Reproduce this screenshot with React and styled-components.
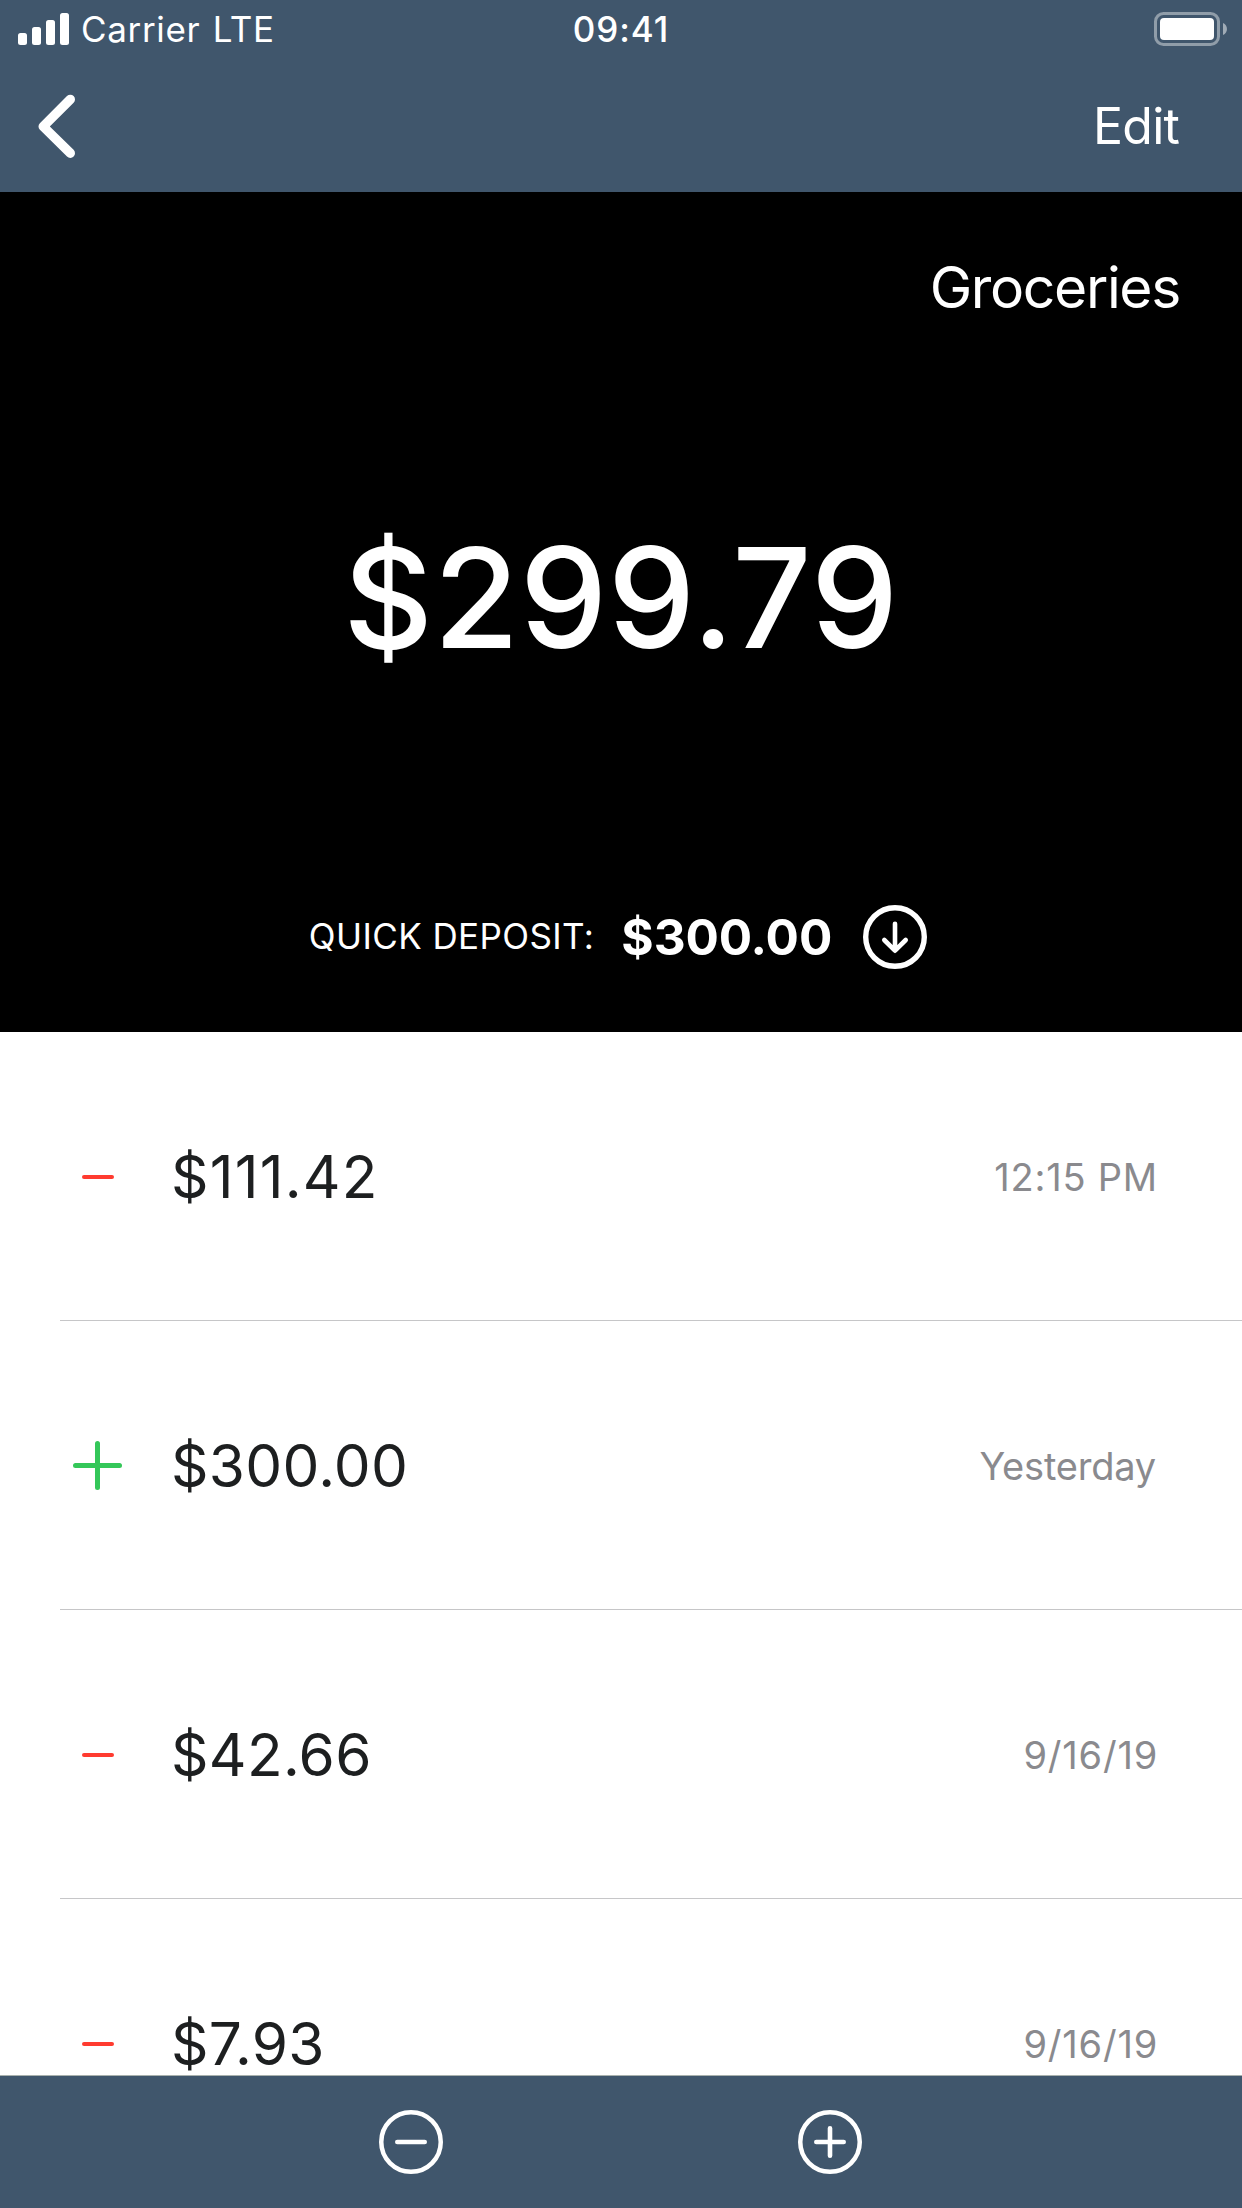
import React from 'react';
import styled, { createGlobalStyle } from 'styled-components';

const GlobalStyle = createGlobalStyle`
  * {
    box-sizing: border-box;
  }

  body {
    margin: 0;
    background: #fff;
    font-family: 'Inter', 'Liberation Sans', sans-serif;
  }

  svg {
    display: block;
    flex-shrink: 0;
  }
`;

// Layout
const Screen = styled.div`
  display: flex;
  flex-direction: column;
  width: 1242px;
  height: 2208px;
  overflow: hidden;
`;

const Header = styled.header`
  height: 192px;
  background: #40566c;
  color: #fff;
`;

const StatusBar = styled.div`
  display: grid;
  grid-template-columns: 1fr auto 1fr;
  align-items: center;
  height: 58px;
  padding: 0 15px 0 18px;
  font-size: 35px;
  line-height: 42px;
`;

const Signal = styled.div`
  display: flex;
  align-items: center;
  gap: 10px;
`;

const Carrier = styled.span`
  letter-spacing: 0.65px;
  word-spacing: 2px;
`;

const Clock = styled.span`
  padding-right: 3px;
  font-weight: 500;
  letter-spacing: 0.9px;
`;

const BatterySlot = styled.div`
  display: flex;
  justify-content: flex-end;
`;

const NavBar = styled.nav`
  display: flex;
  justify-content: space-between;
  align-items: center;
  height: 134px;
  padding: 2px 63px 0 38px;
`;

const NavButton = styled.button`
  padding: 0;
  border: none;
  background: none;
  color: inherit;
  font-family: inherit;
  font-size: 50px;
  line-height: 60px;
  letter-spacing: -0.8px;
`;

// Balance panel
const Hero = styled.section`
  display: flex;
  flex-direction: column;
  height: 840px;
  padding: 60px 0 63px;
  background: #000;
  color: #fff;
`;

const EnvelopeName = styled.h1`
  margin: 0;
  padding-right: 62px;
  font-size: 57px;
  font-weight: 400;
  line-height: 72px;
  letter-spacing: -1.35px;
  text-align: right;
`;

const Balance = styled.div`
  display: flex;
  flex: 1;
  align-items: center;
  justify-content: center;
  padding-bottom: 35px;
  font-size: 139px;
  font-weight: 500;
  letter-spacing: 0.5px;
`;

const QuickDeposit = styled.div`
  display: flex;
  align-items: center;
  justify-content: center;
  height: 64px;
  padding-right: 6px;
`;

const DepositLabel = styled.span`
  margin-right: 27px;
  padding-bottom: 2px;
  font-size: 35px;
  line-height: 42px;
  letter-spacing: 0.4px;
`;

const DepositAmount = styled.span`
  margin-right: 31px;
  font-size: 49.5px;
  font-weight: 700;
  letter-spacing: -0.1px;
`;

// Transactions
const List = styled.ul`
  flex: 1;
  min-height: 0;
  margin: 0;
  padding: 0;
  overflow: hidden;
  list-style: none;
`;

const Row = styled.li`
  display: flex;
  align-items: center;
  height: 289px;
  margin-left: 60px;
  padding: 1px 84px 0 13px;
  border-bottom: 1px solid #c6c6c8;
`;

const Amount = styled.span`
  flex: 1;
  margin-left: 49px;
  color: #1d1f20;
  font-size: 58.5px;
  line-height: 60px;
  letter-spacing: ${props => props.$tracking || '0.3px'};
`;

const When = styled.span`
  padding-right: ${props => props.$inset || '0'};
  color: #8a8a8e;
  font-size: 38px;
  line-height: 46px;
  letter-spacing: ${props => props.$tracking || '0.8px'};
`;

const Toolbar = styled.footer`
  display: flex;
  justify-content: center;
  align-items: center;
  gap: 355px;
  height: 133px;
  padding-right: 1px;
  border-top: 1px solid #a9b1ad;
  background: #40566c;
`;

const ToolButton = styled.button`
  padding: 0;
  border: none;
  background: none;
`;

// Icons
const SignalIcon = () => (
    <svg width="53" height="32" viewBox="0 0 53 32" fill="#fff">
        <rect x="0" y="20" width="9" height="12" rx="2.5" />
        <rect x="14" y="14" width="9" height="18" rx="2.5" />
        <rect x="28" y="7" width="9" height="25" rx="2.5" />
        <rect x="42" y="0" width="9" height="32" rx="2.5" />
    </svg>
);

const BatteryIcon = () => (
    <svg width="73" height="34" viewBox="0 0 73 34">
        <rect x="1.5" y="1.5" width="63" height="31" rx="8" fill="none" stroke="#fff" strokeOpacity="0.42" strokeWidth="3" />
        <rect x="6" y="6" width="54" height="22" rx="4" fill="#fff" />
        <path d="M69 11C74.3 13 74.3 21 69 23Z" fill="#fff" fillOpacity="0.5" />
    </svg>
);

const BackIcon = () => (
    <svg width="38" height="64" viewBox="0 0 38 64" fill="none" stroke="#fff" strokeWidth="9.4" strokeLinecap="round" strokeLinejoin="round">
        <path d="M32.3 5.4L5.2 32.5L32.3 59.2" />
    </svg>
);

const CircleIcon = ({ ring = 4.5, children }) => (
    <svg width="64" height="64" viewBox="0 0 64 64" fill="none" stroke="#fff" strokeWidth="4.6" strokeLinecap="round" strokeLinejoin="round">
        <circle cx="32" cy="32" r={32 - ring / 2} strokeWidth={ring} />
        {children}
    </svg>
);

const SignIcon = ({ type }) => (
    <svg width="49" height="49" viewBox="0 0 49 49" fill={type === 'in' ? '#34c759' : '#ff3b30'}>
        {type === 'in' ? (
            <>
                <rect x="0" y="22" width="49" height="5" rx="2.5" />
                <rect x="22" y="0" width="5" height="49" rx="2.5" />
            </>
        ) : (
            <rect x="9" y="23" width="32" height="4" rx="2" />
        )}
    </svg>
);

const transactions = [
    { type: 'out', amount: '$111.42', when: '12:15 PM', tracking: '1.2px' },
    { type: 'in', amount: '$300.00', when: 'Yesterday', whenTracking: '-0.2px', inset: '2px' },
    { type: 'out', amount: '$42.66', when: '9/16/19' },
    { type: 'out', amount: '$7.93', when: '9/16/19' },
];

const App = () => {
    return (
        <Screen>
            <GlobalStyle />
            <Header>
                <StatusBar>
                    <Signal>
                        <SignalIcon />
                        <Carrier>Carrier LTE</Carrier>
                    </Signal>
                    <Clock>09:41</Clock>
                    <BatterySlot>
                        <BatteryIcon />
                    </BatterySlot>
                </StatusBar>
                <NavBar>
                    <NavButton aria-label="Back"><BackIcon /></NavButton>
                    <NavButton>Edit</NavButton>
                </NavBar>
            </Header>

            <Hero>
                <EnvelopeName>Groceries</EnvelopeName>
                <Balance>$299.79</Balance>
                <QuickDeposit>
                    <DepositLabel>QUICK DEPOSIT:</DepositLabel>
                    <DepositAmount>$300.00</DepositAmount>
                    <CircleIcon ring={5.4}>
                        <path d="M32 18.8V45.5M21.3 35L32 45.7L42.7 35" />
                    </CircleIcon>
                </QuickDeposit>
            </Hero>

            <List>
                {transactions.map((item, index) => (
                    <Row key={index}>
                        <SignIcon type={item.type} />
                        <Amount $tracking={item.tracking}>{item.amount}</Amount>
                        <When $tracking={item.whenTracking} $inset={item.inset}>{item.when}</When>
                    </Row>
                ))}
            </List>

            <Toolbar>
                <ToolButton aria-label="Withdraw">
                    <CircleIcon>
                        <path d="M18.3 32H45.7" />
                    </CircleIcon>
                </ToolButton>
                <ToolButton aria-label="Deposit">
                    <CircleIcon>
                        <path d="M18.3 32H45.7M32 18.3V45.7" />
                    </CircleIcon>
                </ToolButton>
            </Toolbar>
        </Screen>
    );
};

export default App;
